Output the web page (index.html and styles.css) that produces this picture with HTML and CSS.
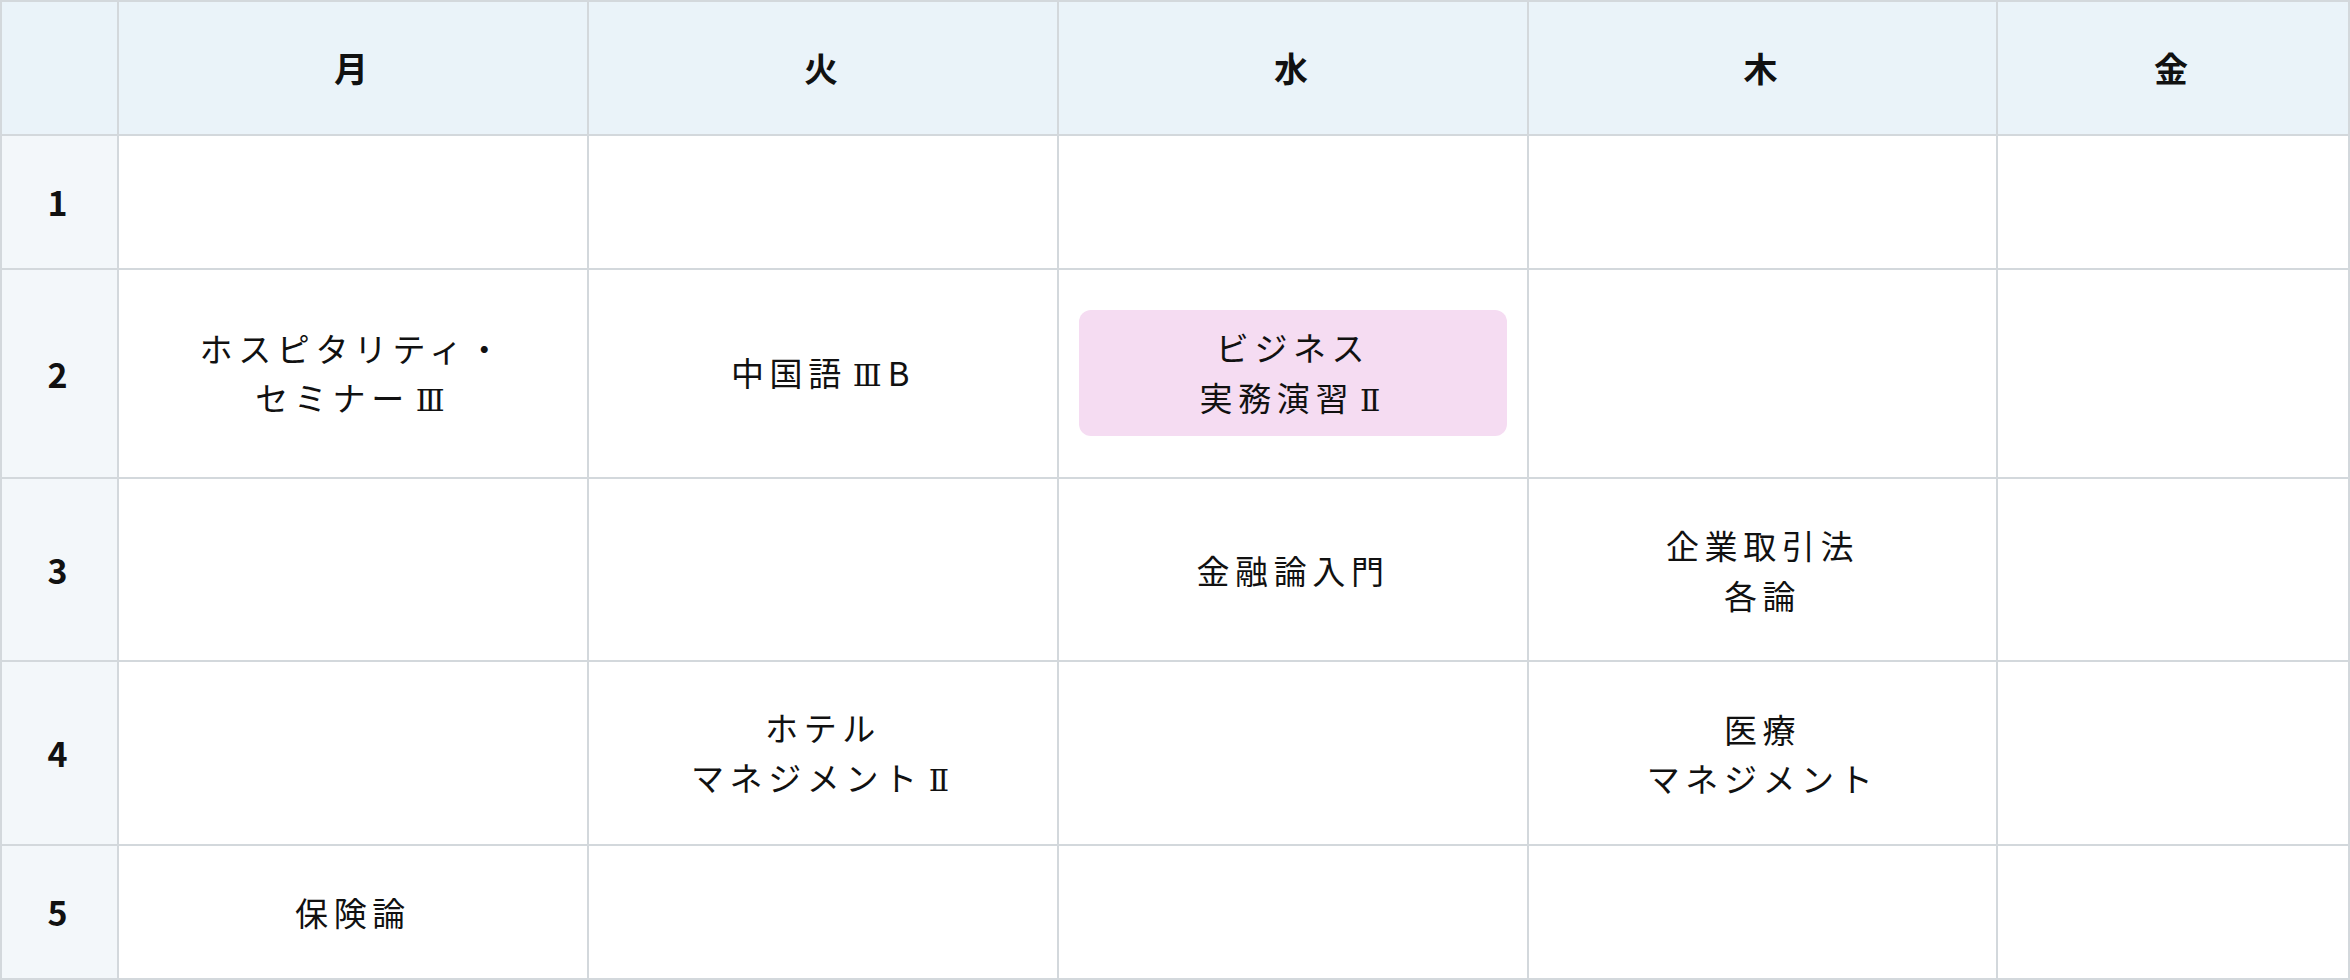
FILE: index.html
```html
<!DOCTYPE html>
<html lang="ja">
<head>
<meta charset="utf-8">
<title>時間割</title>
<link rel="stylesheet" href="styles.css">
</head>
<body>
<div class="timetable">
  <div class="cell corner"></div>
  <div class="cell day">月</div>
  <div class="cell day">火</div>
  <div class="cell day">水</div>
  <div class="cell day">木</div>
  <div class="cell day">金</div>

  <div class="cell period">1</div>
  <div class="cell"></div>
  <div class="cell"></div>
  <div class="cell"></div>
  <div class="cell"></div>
  <div class="cell"></div>

  <div class="cell period">2</div>
  <div class="cell"><p class="course">ホスピタリティ・<br>セミナー<span class="roman">Ⅲ</span></p></div>
  <div class="cell"><p class="course">中国語<span class="roman">Ⅲ</span>B</p></div>
  <div class="cell"><div class="highlight"><p class="course">ビジネス<br>実務演習<span class="roman">Ⅱ</span></p></div></div>
  <div class="cell"></div>
  <div class="cell"></div>

  <div class="cell period">3</div>
  <div class="cell"></div>
  <div class="cell"></div>
  <div class="cell"><p class="course">金融論入門</p></div>
  <div class="cell"><p class="course">企業取引法<br>各論</p></div>
  <div class="cell"></div>

  <div class="cell period">4</div>
  <div class="cell"></div>
  <div class="cell"><p class="course">ホテル<br>マネジメント<span class="roman">Ⅱ</span></p></div>
  <div class="cell"></div>
  <div class="cell"><p class="course">医療<br>マネジメント</p></div>
  <div class="cell"></div>

  <div class="cell period">5</div>
  <div class="cell"><p class="course">保険論</p></div>
  <div class="cell"></div>
  <div class="cell"></div>
  <div class="cell"></div>
  <div class="cell"></div>
</div>
</body>
</html>
```
FILE: styles.css
```css
html, body {
  margin: 0;
  padding: 0;
  background: #ffffff;
}

body {
  font-family: "Noto Sans CJK JP", "Noto Sans", sans-serif;
  color: #111111;
}

.timetable {
  display: grid;
  grid-template-columns: 115px 468px 468px 468px 467px 350px;
  grid-template-rows: 132px 132px 207px 181px 182px 132px;
  gap: 2px;
  padding: 2px;
  background: #d3d8dc;
  width: 2350px;
  box-sizing: border-box;
}

.cell {
  background: #ffffff;
  display: flex;
  align-items: center;
  justify-content: center;
  text-align: center;
  font-size: 33px;
  line-height: 49.5px;
  letter-spacing: 0.17em;
}

.course {
  margin: 0;
  padding-top: 2px;
}

.roman {
  font-family: "DejaVu Serif", "Liberation Serif", serif;
  font-size: 30px;
  margin-left: 6px;
  letter-spacing: 0.2em;
}

.corner,
.day {
  background: #eaf3f9;
}

.day,
.period {
  font-weight: 700;
  font-size: 34px;
  letter-spacing: 0.12em;
}

.period {
  background: #f3f7fa;
}

.highlight {
  align-self: stretch;
  flex: 1;
  margin: 40px 20px 41px 20px;
  background: #f5dcf2;
  border-radius: 12px;
  display: flex;
  align-items: center;
  justify-content: center;
}
```
